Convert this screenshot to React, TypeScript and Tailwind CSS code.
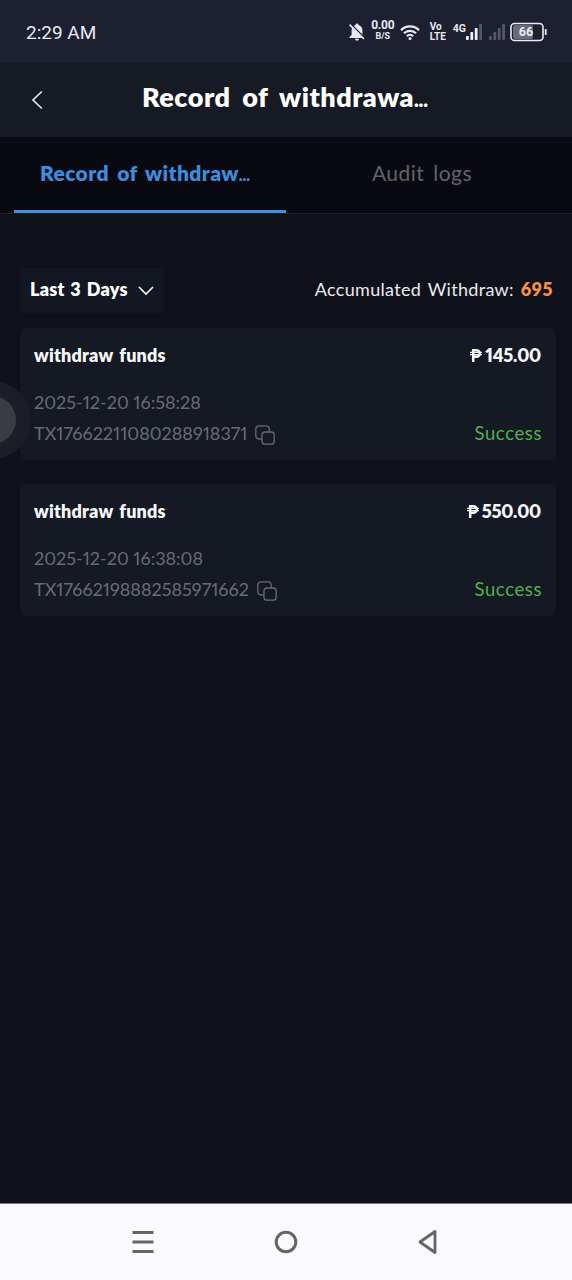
import type { ReactNode } from 'react';

interface WithdrawRecord {
  id: string;
  title: string;
  amount: string;
  createdAt: string;
  status: string;
}

const RECORDS: WithdrawRecord[] = [
  {
    id: 'TX17662211080288918371',
    title: 'withdraw funds',
    amount: '145.00',
    createdAt: '2025-12-20 16:58:28',
    status: 'Success',
  },
  {
    id: 'TX17662198882585971662',
    title: 'withdraw funds',
    amount: '550.00',
    createdAt: '2025-12-20 16:38:08',
    status: 'Success',
  },
];

function StatusBar() {
  return (
    <header className="flex h-[62px] shrink-0 items-center justify-between bg-[#1d2031] pt-0.5 pr-[25px] pl-[26px] font-[Roboto,sans-serif] text-[#e9eaf4]">
      <span className="pt-px text-[19px] leading-6">2:29 AM</span>
      <div className="flex items-center">
        {/* muted bell */}
        <svg width="18" height="20" viewBox="0 0 18 20" fill="none">
          <path d="M9 1.500c.9 0 1.400.6 1.400 1.400 2.600.7 4 2.700 4 5.200v4.600l2 2.400v.9H1.600v-.9l2-2.400V8.100c0-2.500 1.400-4.500 4-5.200 0-.8.5-1.400 1.400-1.400z" fill="currentColor" />
          <path d="M7 16.800h4c0 1.100-.9 1.900-2 1.900s-2-.8-2-1.900z" fill="currentColor" />
          <path d="M2.600 1.800 17 16.200" stroke="#1d2031" strokeWidth="1.500" />
          <path d="M1.600 2.600 16 17" stroke="currentColor" strokeWidth="1.500" />
        </svg>
        <div className="-mt-[3px] ml-[5px] flex w-6 flex-col items-center font-bold">
          <span className="text-[12px] leading-[11px] tracking-[-0.2px]">0.00</span>
          <span className="text-[9px] leading-[11px]">B/S</span>
        </div>
        {/* wifi */}
        <svg className="ml-[5px]" width="20" height="17" viewBox="0 0 20 17" fill="none" stroke="currentColor" strokeWidth="2.200">
          <path d="M1 6.200a12.600 12.600 0 0 1 18 0" />
          <path d="M4 9.300a8.400 8.400 0 0 1 12 0" />
          <path d="M6.900 12.200a4.400 4.400 0 0 1 6.200 0" />
          <circle cx="10" cy="14.500" r="1.500" fill="currentColor" stroke="none" />
        </svg>
        <div className="ml-[10px] flex w-[17px] flex-col items-start font-bold">
          <span className="text-[10px] leading-[10px]">Vo</span>
          <span className="text-[10px] leading-[10px]">LTE</span>
        </div>
        <span className="-mt-[7px] ml-[6px] text-[10.5px] leading-3 font-bold">4G</span>
        <SignalBars level={3} />
        <div className="w-[6px]" />
        <SignalBars level={0} />
        {/* battery */}
        <svg className="ml-[4px]" width="37" height="20" viewBox="0 0 37 20" fill="none">
          <rect x="3" y="3" width="20" height="14" rx="2" fill="#686a78" />
          <rect x="1" y="1.500" width="32" height="17" rx="3.500" stroke="currentColor" strokeWidth="1.600" />
          <path d="M35.700 7v6" stroke="currentColor" strokeWidth="1.800" />
          <text x="16" y="14.300" textAnchor="middle" fill="currentColor" fontSize="12.500" fontWeight="700">66</text>
        </svg>
      </div>
    </header>
  );
}

function SignalBars({ level }: { level: number }) {
  return (
    <svg width="17" height="18" viewBox="0 0 17 18">
      {[0, 1, 2, 3].map((i) => (
        <rect
          key={i}
          x={i * 4.4}
          y={13 - i * 4}
          width="2.800"
          height={4 + i * 4}
          rx="0.800"
          fill={i < level ? '#f1f2fa' : '#555768'}
        />
      ))}
    </svg>
  );
}

function TitleBar() {
  return (
    <div className="flex h-[75px] shrink-0 items-center bg-[#161a25]">
      <button type="button" aria-label="Back" className="ml-[30px] flex size-4 items-center justify-center">
        <svg width="16" height="20" viewBox="0 0 16 20" fill="none" className="shrink-0 text-[#eceef5]">
          <path d="M11.800 1.500 3 10l8.800 8.500" stroke="currentColor" strokeWidth="1.600" />
        </svg>
      </button>
      <h1 className="ml-[96px] pb-1 text-[27px] leading-9 font-extrabold tracking-[0.5px] whitespace-nowrap text-white [word-spacing:5px]">
        Record of withdrawa<span className="text-[20px] tracking-[-0.2px]">...</span>
      </h1>
    </div>
  );
}

function Tab({ active, children }: { active?: boolean; children: ReactNode }) {
  return (
    <button
      type="button"
      className={`flex h-[76px] w-1/2 justify-center border-b-[3px] pt-6 text-[21px] leading-6 whitespace-nowrap ${
        active
          ? 'border-[#458fd8] pr-[10px] font-extrabold tracking-[0.4px] text-[#3f8bdc] [word-spacing:3px]'
          : 'border-transparent tracking-[0.5px] text-[#626368] [word-spacing:3px]'
      }`}
    >
      <span>{children}</span>
    </button>
  );
}

function RecordCard({ record }: { record: WithdrawRecord }) {
  return (
    <article className="flex h-[132px] flex-col rounded-md bg-[#151923] px-[14px] pt-[15px] text-[18px] leading-6 proportional-nums">
      <div className="flex justify-between font-extrabold text-[#f7f8fc]">
        <span className="tracking-[0.2px] [word-spacing:2px]">{record.title}</span>
        <span className="flex items-center gap-[3px] pr-px tracking-[-0.2px]">
          <PesoSign />
          {record.amount}
        </span>
      </div>
      <div className="mt-[23px] text-[#696b73]">{record.createdAt}</div>
      <div className="mt-[7px] flex items-center justify-between">
        <div className="flex items-center gap-2 text-[#696b73]">
          <span>{record.id}</span>
          <CopyIcon />
        </div>
        <span className="text-[18.5px] tracking-[0.6px] text-[#4fb151]">{record.status}</span>
      </div>
    </article>
  );
}

function PesoSign() {
  return (
    <svg width="12" height="13" viewBox="0 0 12 13" fill="none" stroke="currentColor">
      <path d="M3.200 13V1.200h3.300a3.200 3.200 0 0 1 0 6.500H3.200" strokeWidth="2.500" />
      <path d="M0 3.300h12M0 5.700h12" strokeWidth="1.200" />
    </svg>
  );
}

function CopyIcon() {
  return (
    <svg width="20" height="20" viewBox="0 0 20 20" fill="none" stroke="currentColor" strokeWidth="1.300" className="mt-[3px]">
      <path d="M6.500 14H4a3.200 3.200 0 0 1-3.200-3.200V4A3.200 3.200 0 0 1 4 .8h7A3.200 3.200 0 0 1 14.200 4v2.500" />
      <rect x="7" y="7" width="12.200" height="12.200" rx="3" />
    </svg>
  );
}

function NavigationBar() {
  return (
    <nav className="flex h-[77px] shrink-0 items-center border-t border-[#77777f] bg-[#faf9ff] px-[72px] text-[#656467]">
      <button type="button" aria-label="Recent apps" className="flex w-1/3 justify-center">
        <svg width="22" height="24" viewBox="0 0 22 24" stroke="currentColor" strokeWidth="3">
          <path d="M.5 2.500h21M.5 12h21M.5 21.500h21" />
        </svg>
      </button>
      <button type="button" aria-label="Home" className="flex w-1/3 justify-center">
        <svg width="24" height="24" viewBox="0 0 24 24" fill="none" stroke="currentColor" strokeWidth="3">
          <circle cx="12" cy="12" r="9.800" />
        </svg>
      </button>
      <button type="button" aria-label="Back" className="flex w-1/3 justify-center pr-0.5">
        <svg width="22" height="26" viewBox="0 0 22 26" fill="none" stroke="currentColor" strokeWidth="2.800" strokeLinejoin="round">
          <path d="M18 2.500v21L3 13z" />
        </svg>
      </button>
    </nav>
  );
}

export default function App() {
  return (
    <div className="relative flex h-[1280px] w-[572px] flex-col overflow-hidden bg-[#0f111b] font-[Lato,sans-serif]">
      <StatusBar />
      <TitleBar />
      <div className="flex h-[77px] shrink-0 border-b border-[#1b1f29] bg-[#090a11] px-[14px]">
        <Tab active>
          Record of withdraw<span className="text-[16px] tracking-[-0.1px]">...</span>
        </Tab>
        <Tab>Audit logs</Tab>
      </div>

      <main className="flex flex-1 flex-col pt-[54px] pr-4 pl-5">
        <div className="flex items-start justify-between text-[18px] leading-6">
          <button type="button" className="flex h-[45px] w-[144px] justify-between rounded bg-[#131721] pt-[9px] pr-[10px] pl-[10px] font-extrabold tracking-[0.2px] text-white [word-spacing:1.5px]">
            Last 3 Days
            <svg width="16" height="10" viewBox="0 0 16 10" fill="none" className="mt-[9px]">
              <path d="m1 1 7 7 7-7" stroke="currentColor" strokeWidth="1.600" />
            </svg>
          </button>
          <div className="pt-[9px] pr-[3px] tracking-[0.3px] whitespace-nowrap text-[#e9eaf0] [word-spacing:2px]">
            Accumulated Withdraw: <span className="font-extrabold text-[#f79145]">695</span>
          </div>
        </div>
        <div className="mt-[15px] flex flex-col gap-6">
          {RECORDS.map((record) => (
            <RecordCard key={record.id} record={record} />
          ))}
        </div>
      </main>

      <NavigationBar />

      {/* floating assistive button, docked half off the left edge */}
      <div className="absolute top-[381px] -left-[47px] flex size-[78px] items-center justify-center rounded-full bg-[#1c1e27]">
        <div className="size-12 rounded-full bg-[#3b3b44]" />
      </div>
    </div>
  );
}
